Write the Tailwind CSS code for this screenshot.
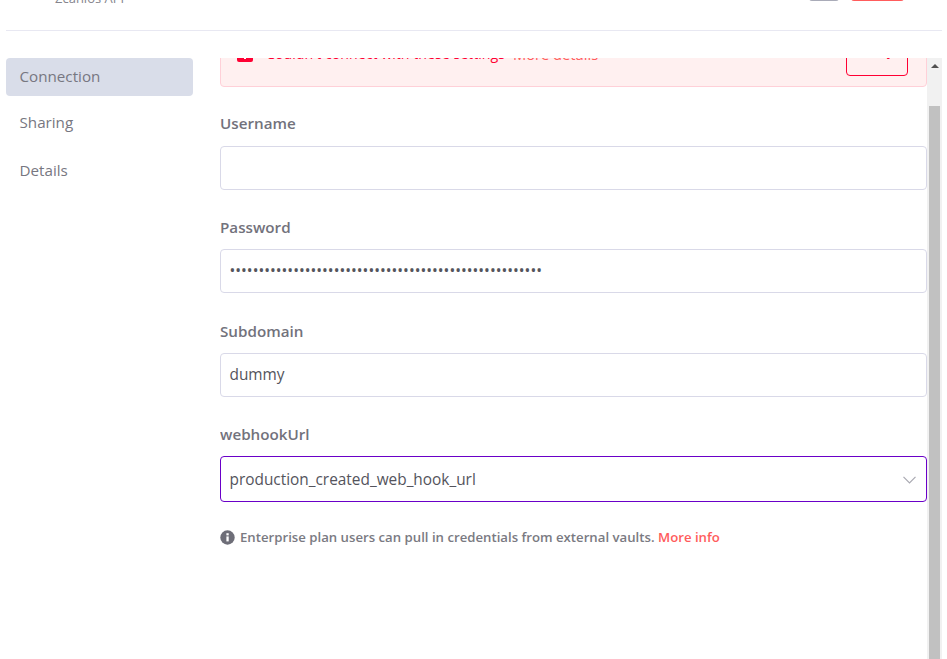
<!doctype html>
<html><head><meta charset="utf-8"><script src="https://cdn.jsdelivr.net/npm/@tailwindcss/browser@4"></script></head>
<body class="bg-white">
<div class="w-[947px] h-[659px] overflow-hidden font-['Open_Sans',sans-serif] text-[#72727c] flex flex-col">
  <header class="h-[31px] ml-[6px] mr-[5px] shrink-0 border-b border-[#e8e8f2] relative overflow-hidden flex">
    <div class="ml-[49px] -mt-[11px] h-[18px] text-[13px] leading-[18px] text-[#85858d] w-[749px]">Zcanlos API</div>
    <div class="-mt-[20px] ml-[5px] w-[30px] h-[21px] bg-[#a9abb8] rounded-[3px]"></div>
    <div class="-mt-[20px] ml-[12px] w-[53px] h-[21px] bg-[#ff5c5c] rounded-[3px]"></div>
  </header>
  <div class="flex flex-1 min-h-0 pt-[27px]">
    <nav class="w-[187px] ml-[6px] shrink-0 text-[15.2px] flex flex-col text-[#777781]">
      <div class="h-[38px] bg-[#d9dde9] rounded-[4px] pl-[13.5px] pb-[2px] flex items-center -mb-[1px]">Connection</div>
      <div class="h-[24px] mt-[15px] pl-[13.5px] flex items-center">Sharing</div>
      <div class="h-[24px] mt-[24px] pl-[13.5px] flex items-center">Details</div>
    </nav>
    <main class="ml-[27px] w-[707px] shrink-0 overflow-hidden">
      <div class="-mt-[38px] h-[67px] w-[707px] bg-[#fff0f0] border border-[#ffd0d8] rounded-[4px] flex items-end pl-[16px] pr-[18px] pb-[21px] text-[#ff0033] relative">
        <svg class="w-[16px] h-[16px] mb-[3px] shrink-0" viewBox="0 0 16 16"><rect width="16" height="16" rx="2" fill="#ff0033"/><rect x="7" y="3" width="2" height="10" fill="#fff"/></svg>
        <span class="ml-[13px] text-[14.2px] leading-[22px] whitespace-nowrap">Couldn't connect with these settings</span>
        <span class="ml-[8px] text-[14.7px] leading-[22px] whitespace-nowrap text-[#ff5c5c]">More details</span>
        <div class="ml-auto w-[62px] h-[32px] -mb-[11px] pb-[21px] border border-[#ff0033] rounded-[4px] text-[14px] flex items-center justify-center">Retry</div>
      </div>
      <div class="mt-[25px] h-[22px] text-[15.2px] leading-[22px] font-semibold">Username</div>
      <div class="mt-[12px] h-[44px] w-[707px] border border-[#d9d9e8] rounded-[4px]"></div>
      <div class="mt-[26px] h-[22px] text-[15.2px] leading-[22px] font-semibold">Password</div>
      <div class="mt-[11px] h-[44px] w-[707px] border border-[#d9d9e8] rounded-[4px] flex items-center pl-[8.5px] text-[15.4px] text-[#54545c]">••••••••••••••••••••••••••••••••••••••••••••••••••••••</div>
      <div class="mt-[27px] h-[22px] text-[15.2px] leading-[22px] font-semibold">Subdomain</div>
      <div class="mt-[11px] h-[44px] w-[707px] border border-[#d9d9e8] rounded-[4px] flex items-center pl-[8.5px] text-[15.4px] text-[#54545c]">dummy</div>
      <div class="mt-[26px] h-[22px] text-[15.2px] leading-[22px] font-semibold">webhookUrl</div>
      <div class="mt-[11px] h-[46px] w-[707px] border border-[#6a00c8] rounded-[4px] flex items-center pl-[8.5px] pt-[1px] pr-[10px] text-[15.4px] text-[#54545c]">
        <span class="flex-1">production_created_web_hook_url</span>
        <svg class="w-[13px] h-[8px]" viewBox="0 0 13 8" fill="none" stroke="#a9a9b2" stroke-width="1.2"><path d="M.5.8 6.5 6.8 12.5.8"/></svg>
      </div>
      <div class="mt-[25px] flex items-center text-[13.2px] leading-[20px] font-semibold text-[#7a7a82]">
        <svg class="w-[15px] h-[15px] mr-[5px] shrink-0" viewBox="0 0 15 15"><circle cx="7.5" cy="7.5" r="7.2" fill="#6e6e78"/><rect x="6.4" y="6.4" width="2.3" height="5" fill="#fff"/><rect x="6.4" y="3.2" width="2.3" height="2.2" fill="#fff"/></svg>
        <span>Enterprise plan users can pull in credentials from external vaults.</span>
        <span class="ml-[3.5px] text-[#ff5c5c]">More info</span>
      </div>
    </main>
    <div class="w-[15px] bg-[#f1f1f1] shrink-0 flex flex-col items-center pt-[6px]">
      <svg class="w-[8px] h-[4px]" viewBox="0 0 8 4"><path d="M4 0 8 4H0Z" fill="#505050"/></svg>
      <div class="w-[11px] flex-1 mt-[38px] bg-[#c1c1c1]"></div>
    </div>
  </div>
</div>
</body></html>
